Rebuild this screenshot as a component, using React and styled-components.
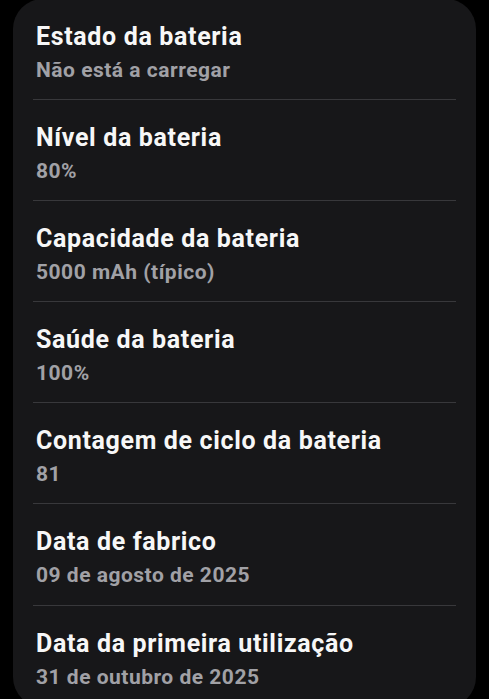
import React from 'react';
import styled, { createGlobalStyle } from "styled-components";

const items = [
  { title: "Estado da bateria", value: "Não está a carregar" },
  { title: "Nível da bateria", value: "80%" },
  { title: "Capacidade da bateria", value: "5000 mAh (típico)" },
  { title: "Saúde da bateria", value: "100%" },
  { title: "Contagem de ciclo da bateria", value: "81" },
  { title: "Data de fabrico", value: "09 de agosto de 2025" },
  { title: "Data da primeira utilização", value: "31 de outubro de 2025" },
];

const App = () => {
  return (
    <>
      <GlobalStyle />
      <StyledPage>
        <StyledCard>
          {items.map((item, i) => (
            <StyledRow key={item.title} divider={i < items.length - 1}>
              <h3>{item.title}</h3>
              <p>{item.value}</p>
            </StyledRow>
          ))}
        </StyledCard>
      </StyledPage>
    </>
  );
};

const GlobalStyle = createGlobalStyle`
  html, body {
    margin: 0;
    padding: 0;
    background: #000;
  }
  body {
    font-family: Roboto, "Noto Sans", "Liberation Sans", sans-serif;
    -webkit-font-smoothing: antialiased;
  }
`;

const StyledPage = styled.div`
  height: 699px;
  overflow: hidden;
  padding: 0 13px;
`;

const StyledCard = styled.div`
  margin-top: -1.5px;
  background: #171719;
  border-radius: 30px;
  display: flex;
  flex-direction: column;
`;

const StyledRow = styled.div.withConfig({ shouldForwardProp: (p) => p !== "divider" })`
  position: relative;
  padding: 22px 23px 15.2px;
  border-bottom: 1px solid transparent;
  h3 {
    margin: 0;
    font-size: 25px;
    line-height: 32px;
    font-weight: 700;
    letter-spacing: 0.65px;
    color: #f7f7f7;
  }
  p {
    margin: 3px 0 0;
    font-size: 21px;
    line-height: 28px;
    font-weight: 700;
    letter-spacing: 0.5px;
    color: #a1a1a6;
  }
  &::after {
    content: "";
    display: ${(props) => (props.divider ? "block" : "none")};
    position: absolute;
    left: 20px;
    right: 20px;
    bottom: -1px;
    height: 1px;
    background: #38383b;
  }
`;

export default App;
